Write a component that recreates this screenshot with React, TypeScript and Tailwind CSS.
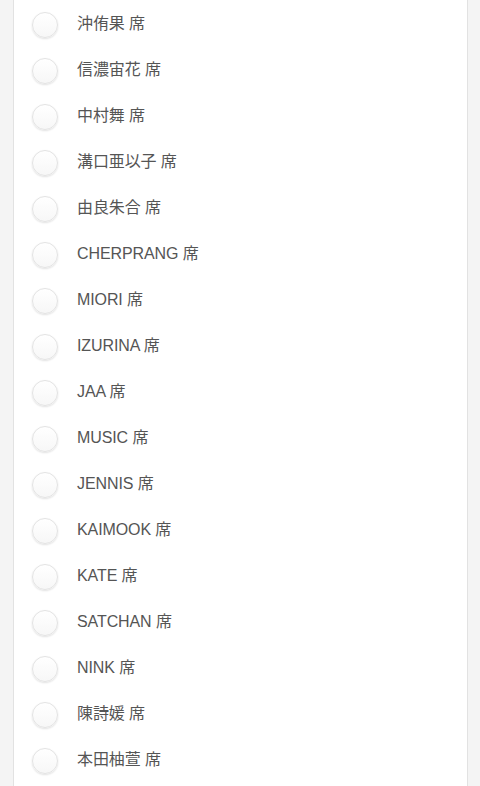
import React from "react";

const names = [
  "沖侑果",
  "信濃宙花",
  "中村舞",
  "溝口亜以子",
  "由良朱合",
  "CHERPRANG",
  "MIORI",
  "IZURINA",
  "JAA",
  "MUSIC",
  "JENNIS",
  "KAIMOOK",
  "KATE",
  "SATCHAN",
  "NINK",
  "陳詩媛",
  "本田柚萱",
];

export default function App() {
  return (
    <div className="w-[480px] h-[786px] overflow-hidden bg-[#f4f4f4] pl-[13px] pr-[12px]">
      <div className="h-full bg-white border-x border-[#e2e2e2]">
        <div className="pt-px">
          {names.map((n) => (
            <div key={n} className="h-[46px] flex items-center pl-[18px]">
              <div className="mt-[2px] w-[26px] h-[26px] rounded-full border border-[#e3e3e3] bg-[linear-gradient(#ffffff,#f7f7f7)] shadow-[0_1px_2px_rgba(0,0,0,0.12)] shrink-0" />
              <span
                className="ml-[19px] text-[16px] text-[#555] leading-none tracking-[-0.1px]"
                style={{ fontFamily: '"Liberation Sans", "Noto Sans CJK JP", sans-serif' }}
              >
                {n} 席
              </span>
            </div>
          ))}
        </div>
      </div>
    </div>
  );
}
